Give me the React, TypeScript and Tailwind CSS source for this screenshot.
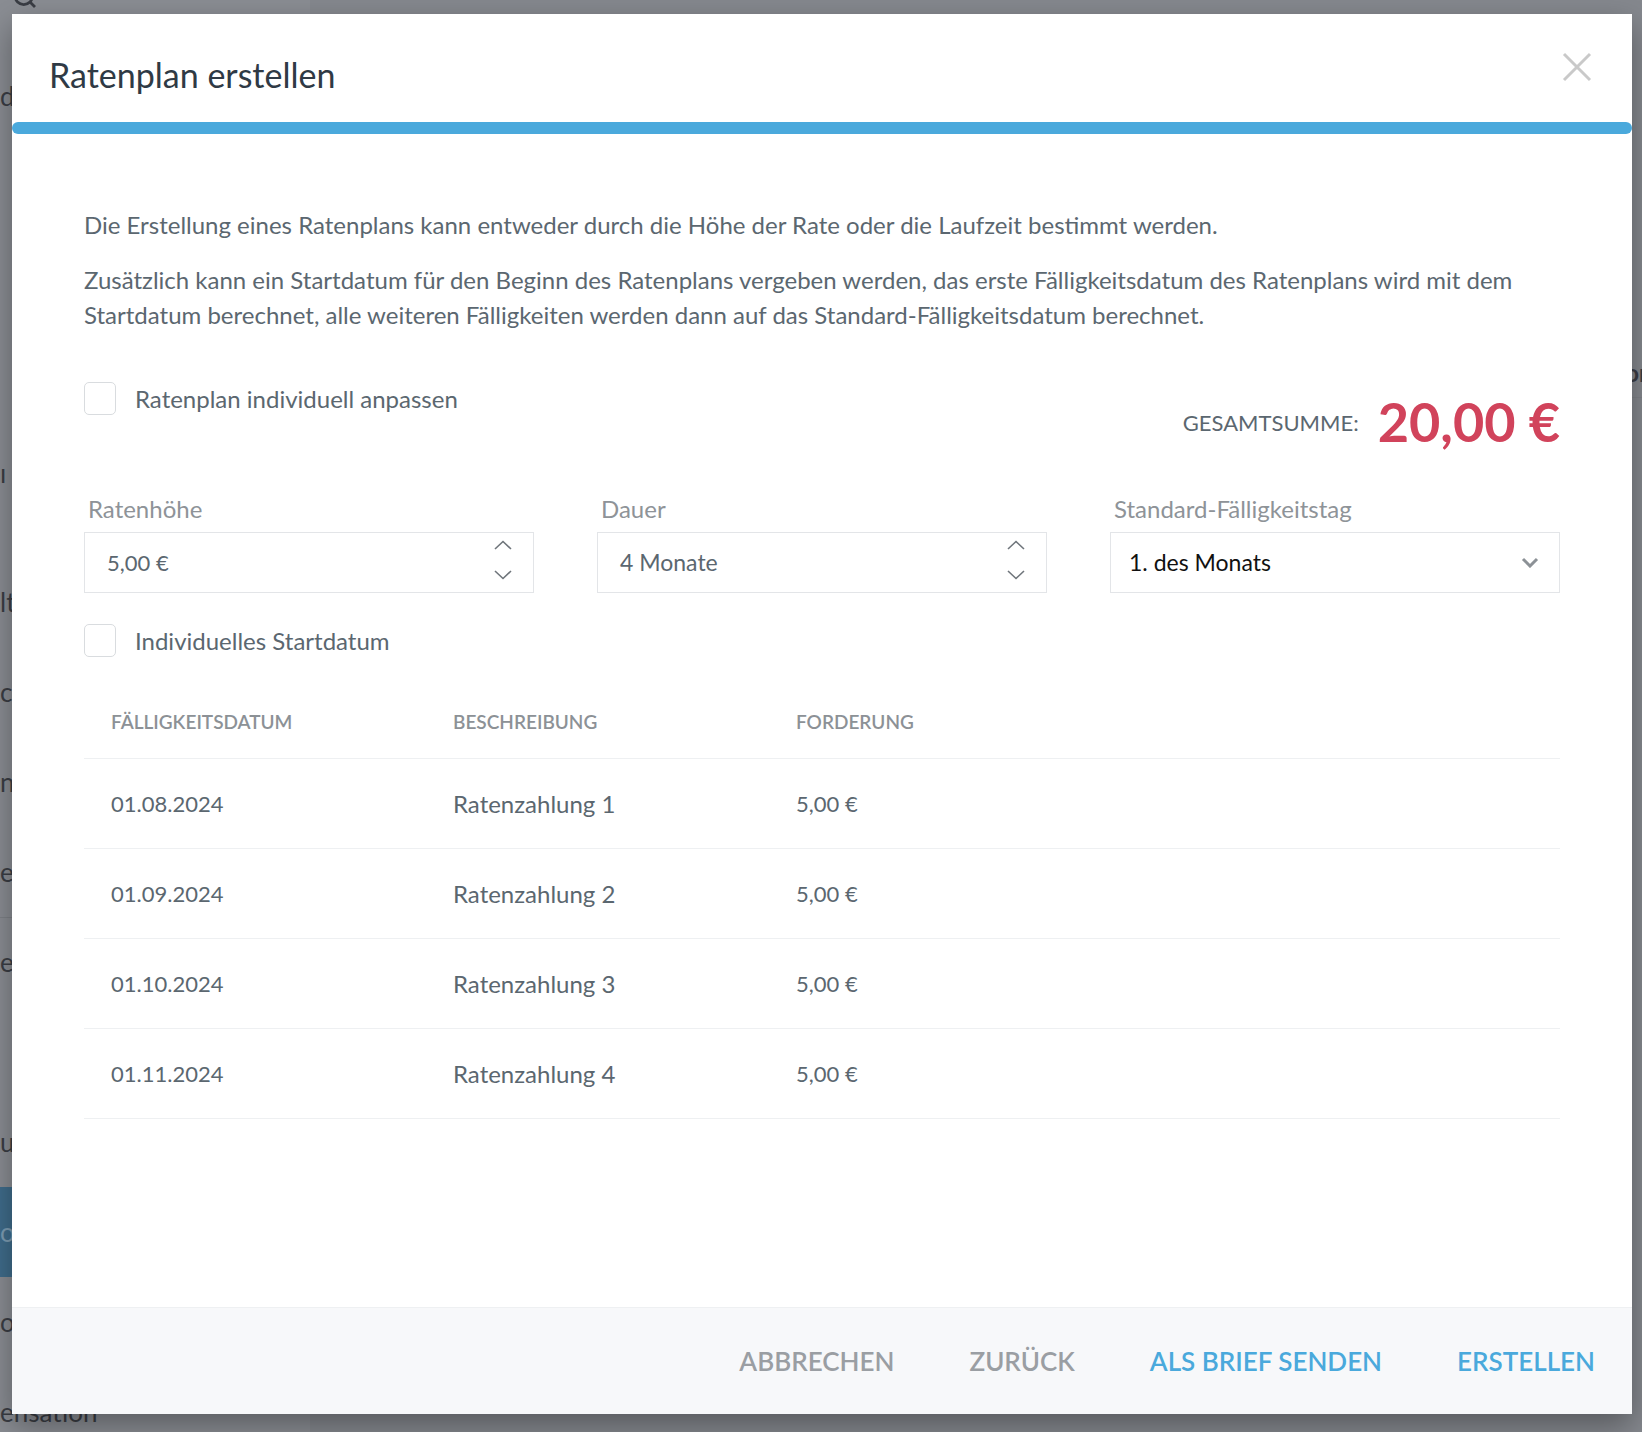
import React from "react";

const font = "font-['Lato','Noto_Sans',sans-serif]";

const rows = [
  { date: "01.08.2024", desc: "Ratenzahlung 1", amount: "5,00 €" },
  { date: "01.09.2024", desc: "Ratenzahlung 2", amount: "5,00 €" },
  { date: "01.10.2024", desc: "Ratenzahlung 3", amount: "5,00 €" },
  { date: "01.11.2024", desc: "Ratenzahlung 4", amount: "5,00 €" },
];

// fragments of the sidebar that peek out left of the dialog
const sideItems = ["lt", "cl", "ne", "e", "e", "", "ur", "ol", "o", "ensation"];

const Spinner = () => (
  <div className="flex flex-col items-center gap-[20px] mb-[6px]">
    <svg width="18" height="10" viewBox="0 0 18 10">
      <polyline points="1,9 9,1.5 17,9" fill="none" stroke="#6f757b" strokeWidth="1.6" />
    </svg>
    <svg width="18" height="10" viewBox="0 0 18 10">
      <polyline points="1,1 9,8.5 17,1" fill="none" stroke="#6f757b" strokeWidth="1.6" />
    </svg>
  </div>
);

const Checkbox = ({ label }: { label: string }) => (
  <label className="flex items-center gap-[19px] cursor-pointer">
    <span className="w-[32px] h-[33px] rounded-[5px] border border-[#d9dcdf] bg-white shrink-0" />
    <span className="text-[24px] leading-[30px] text-[#5b6770]">{label}</span>
  </label>
);

export default function App() {
  return (
    <div className={`relative h-[1432px] w-full overflow-hidden bg-[#8a8d93] ${font}`}>
      {/* dimmed page behind the dialog */}
      <div className="flex h-full">
        <aside className="w-[310px] shrink-0 text-[26px] text-[#3a3d44]">
          <div className="h-[40px] -mt-[18px] pl-[10px]">
            <svg width="30" height="30" viewBox="0 0 24 24" fill="none" stroke="#3a3d44" strokeWidth="2.2">
              <circle cx="11" cy="11" r="7" />
              <path d="m20 20-4-4" />
            </svg>
          </div>
          <div className="mt-[36px] h-[76px] flex items-center">d</div>
          <div className="mt-[294px] h-[90px] flex items-center">ı</div>
          <div className="pt-[39px]">
            {sideItems.map((t, i) => (
              <div
                key={i}
                className={`h-[90px] flex items-center ${i === 7 ? "bg-[#3f6c8b] text-[#7d9db3]" : ""} ${i === 4 ? "border-t border-[#7d8086]" : ""}`}
              >
                {t}
              </div>
            ))}
          </div>
        </aside>
        <main className="flex-1 bg-[#85888e]">
          <div className="mt-[348px] h-[50px] border-b border-[#7f8288] flex items-end justify-end pb-[6px] text-[24px] font-bold text-[#3a3d44]">
            <span className="-mr-[6px]">Vor</span>
          </div>
        </main>
      </div>

      {/* dialog */}
      <div className="absolute left-[12px] top-[14px] w-[1620px] h-[1400px] bg-white flex flex-col shadow-[0_12px_30px_rgba(0,0,0,0.35)]">
        <div className="h-[108px] flex items-start justify-between pl-[37px] pr-[40px] pt-[38px]">
          <h2 className="mt-[3px] text-[34px] leading-[40px] text-[#2f3a45]">Ratenplan erstellen</h2>
          <button aria-label="Schließen" className="w-[30px] h-[30px]">
            <svg width="30" height="30" viewBox="0 0 30 30">
              <path d="M2 2 28 28M28 2 2 28" stroke="#c9c9c9" strokeWidth="3" />
            </svg>
          </button>
        </div>
        <div className="h-[12px] w-full rounded-full bg-[#4aa9dc]" />

        <div className="px-[72px] pt-[73px]">
          <p className="text-[24px] leading-[35px] text-[#5b6770]">
            Die Erstellung eines Ratenplans kann entweder durch die Höhe der Rate oder die Laufzeit bestimmt werden.
          </p>
          <p className="mt-[20px] text-[24px] leading-[35px] text-[#5b6770]">
            Zusätzlich kann ein Startdatum für den Beginn des Ratenplans vergeben werden, das erste Fälligkeitsdatum des
            Ratenplans wird mit dem Startdatum berechnet, alle weiteren Fälligkeiten werden dann auf das
            Standard-Fälligkeitsdatum berechnet.
          </p>

          <div className="mt-[50px] flex items-start justify-between">
            <Checkbox label="Ratenplan individuell anpassen" />
            <div className="mt-[12px] flex items-center gap-[19px]">
              <span className="text-[22px] uppercase text-[#5b6770]">Gesamtsumme:</span>
              <span className="text-[54px] leading-[56px] font-bold text-[#d1435b]">20,00 €</span>
            </div>
          </div>

          <div className="mt-[44px] grid grid-cols-3 gap-x-[63px]">
            <div>
              <div className="pl-[4px] text-[24px] leading-[30px] text-[#8e9398]">Ratenhöhe</div>
              <div className="mt-[8px] h-[61px] border border-[#e3e5e8] flex items-center justify-between pl-[22px] pr-[21px]">
                <span className="text-[22px] text-[#5b6770]">5,00 €</span>
                <Spinner />
              </div>
            </div>
            <div>
              <div className="pl-[4px] text-[24px] leading-[30px] text-[#8e9398]">Dauer</div>
              <div className="mt-[8px] h-[61px] border border-[#e3e5e8] flex items-center justify-between pl-[22px] pr-[21px]">
                <span className="text-[23px] text-[#5b6770]">4 Monate</span>
                <Spinner />
              </div>
            </div>
            <div>
              <div className="pl-[4px] text-[24px] leading-[30px] text-[#8e9398]">Standard-Fälligkeitstag</div>
              <div className="mt-[8px] h-[61px] border border-[#e3e5e8] flex items-center justify-between pl-[18px] pr-[20px]">
                <span className="text-[23px] text-[#111111]">1. des Monats</span>
                <svg width="18" height="11" viewBox="0 0 18 11">
                  <polyline points="2,2 9,9 16,2" fill="none" stroke="#8c9196" strokeWidth="3" />
                </svg>
              </div>
            </div>
          </div>

          <div className="mt-[31px]">
            <Checkbox label="Individuelles Startdatum" />
          </div>

          <div className="mt-[30px]">
            <div className="h-[72px] grid grid-cols-[342px_343px_343px_1fr] items-center px-[27px] border-b border-[#eef0f2] text-[19px] font-semibold uppercase text-[#8c9196]">
              <span>Fälligkeitsdatum</span>
              <span>Beschreibung</span>
              <span>Forderung</span>
              <span />
            </div>
            {rows.map((r) => (
              <div
                key={r.date}
                className="h-[90px] grid grid-cols-[342px_343px_343px_1fr] items-center px-[27px] border-b border-[#eef0f2] text-[22px] text-[#5b6770]"
              >
                <span>{r.date}</span>
                <span className="text-[24px]">{r.desc}</span>
                <span>{r.amount}</span>
                <span />
              </div>
            ))}
          </div>
        </div>

        <div className="mt-auto h-[107px] bg-[#f7f8fa] border-t border-[#eef0f2] flex items-center justify-end gap-[75px] pr-[37px] text-[26px] font-semibold uppercase">
          <button className="text-[#9a9ea3] uppercase">Abbrechen</button>
          <button className="text-[#9a9ea3] uppercase">Zurück</button>
          <button className="text-[#4aa9dc] uppercase">Als Brief senden</button>
          <button className="text-[#4aa9dc] uppercase">Erstellen</button>
        </div>
      </div>
    </div>
  );
}
